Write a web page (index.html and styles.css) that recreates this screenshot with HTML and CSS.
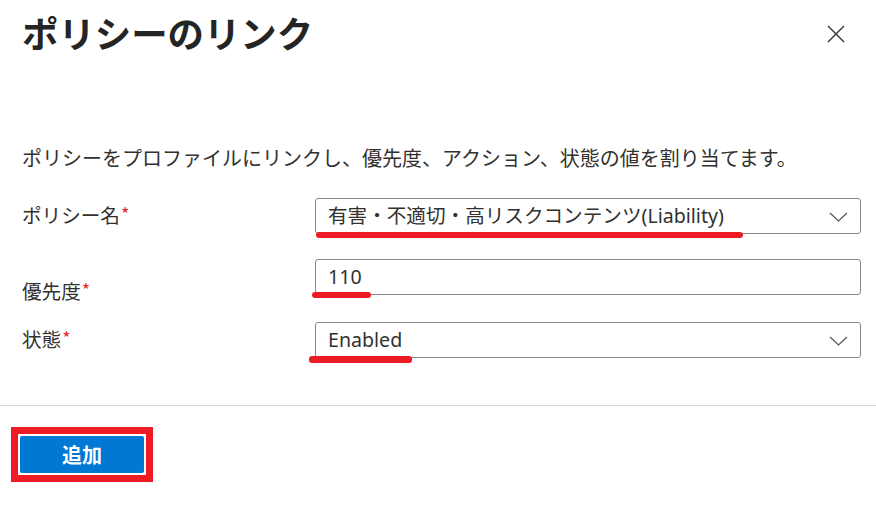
FILE: index.html
```html
<!DOCTYPE html>
<html lang="ja">
<head>
<meta charset="utf-8">
<title>ポリシーのリンク</title>
<link rel="stylesheet" href="styles.css">
</head>
<body>
<div class="panel">
  <div class="main">
    <div class="header">
      <h1 class="title">ポリシーのリンク</h1>
      <button class="close" aria-label="閉じる">
        <svg width="18" height="18" viewBox="0 0 18 18"><path d="M1 1 L17 17 M17 1 L1 17" stroke="#3b3b3b" stroke-width="1.5" fill="none"/></svg>
      </button>
    </div>
    <p class="desc">ポリシーをプロファイルにリンクし、優先度、アクション、状態の値を割り当てます。</p>
    <div class="form">
      <div class="row">
        <div class="label">ポリシー名<span class="req">*</span></div>
        <div class="field">
          <div class="control">
            <span class="value">有害・不適切・高リスクコンテンツ(Liability)</span>
            <svg class="chev" width="19" height="10" viewBox="0 0 19 10"><path d="M1 1 L9.5 9 L18 1" stroke="#555" stroke-width="1.2" fill="none"/></svg>
          </div>
          <span class="mark mark-policy"></span>
        </div>
      </div>
      <div class="row row-priority">
        <div class="label label-low">優先度<span class="req">*</span></div>
        <div class="field">
          <div class="control">
            <span class="value">110</span>
          </div>
          <span class="mark mark-priority"></span>
        </div>
      </div>
      <div class="row row-state">
        <div class="label">状態<span class="req">*</span></div>
        <div class="field">
          <div class="control">
            <span class="value">Enabled</span>
            <svg class="chev" width="19" height="10" viewBox="0 0 19 10"><path d="M1 1 L9.5 9 L18 1" stroke="#555" stroke-width="1.2" fill="none"/></svg>
          </div>
          <span class="mark mark-state"></span>
        </div>
      </div>
    </div>
  </div>
  <div class="footer">
    <div class="highlight">
      <button class="primary">追加</button>
    </div>
  </div>
</div>
</body>
</html>
```

FILE: styles.css
```css
* { box-sizing: border-box; }
html, body { margin: 0; padding: 0; background: #fff; }
body {
  font-family: "Segoe UI", "Noto Sans", "Noto Sans CJK JP", sans-serif;
  color: #323130;
  width: 876px;
  height: 512px;
  overflow: hidden;
}
.main { padding: 0 15px 0 22px; }
.header {
  height: 64px;
  display: flex;
  align-items: center;
  justify-content: space-between;
}
.title {
  margin: 0;
  font-family: "Noto Sans CJK JP", sans-serif;
  font-size: 36.4px;
  font-weight: 700;
  line-height: 64px;
  color: #242424;
}
.close {
  width: 18px;
  height: 18px;
  padding: 0;
  margin: 4px 16px 0 0;
  border: 0;
  background: none;
  display: flex;
}
.desc {
  margin: 80px 0 0;
  font-size: 20px;
  line-height: 28px;
  font-family: "Noto Sans CJK JP", sans-serif;
}
.form {
  margin-top: 26px;
  display: flex;
  flex-direction: column;
}
.row {
  display: grid;
  grid-template-columns: 293px 1fr;
  grid-template-rows: 36px;
}
.row-priority { margin-top: 25px; }
.row-state { margin-top: 27px; }
.label {
  padding-top: 1px;
  font-size: 19.6px;
  line-height: 28px;
  font-family: "Noto Sans CJK JP", sans-serif;
}
.label-low { padding-top: 16px; }
.req {
  color: #e8262d;
  font-size: 18px;
  vertical-align: 2px;
  margin-left: 1px;
}
.field { position: relative; }
.control {
  height: 36px;
  border: 1px solid #8a8886;
  border-radius: 3px;
  display: flex;
  align-items: center;
  justify-content: space-between;
  padding: 0 12px 0 12px;
  font-size: 19.6px;
}
.value { line-height: 28px; }
.chev { display: block; margin-top: 1px; }
.mark {
  position: absolute;
  height: 6px;
  background: #ed1c24;
  border-radius: 3px;
}
.mark-policy { left: 1px; top: 34px; width: 427px; }
.mark-priority { left: -3px; top: 33px; width: 59px; }
.mark-state { left: -6px; top: 34px; width: 103px; height: 7px; }
.footer {
  margin-top: 47px;
  border-top: 1px solid #d6d6d6;
  padding: 21px 0 0 11px;
}
.highlight {
  display: inline-block;
  border: 7px solid #ed1c24;
  padding: 2px;
  background: #fff;
}
.primary {
  display: block;
  width: 124px;
  height: 37px;
  border: 0;
  border-radius: 2px;
  background: #0078d4;
  color: #fff;
  font-family: "Noto Sans CJK JP", sans-serif;
  font-weight: 700;
  font-size: 20px;
  line-height: 37px;
  padding: 0;
}
```
